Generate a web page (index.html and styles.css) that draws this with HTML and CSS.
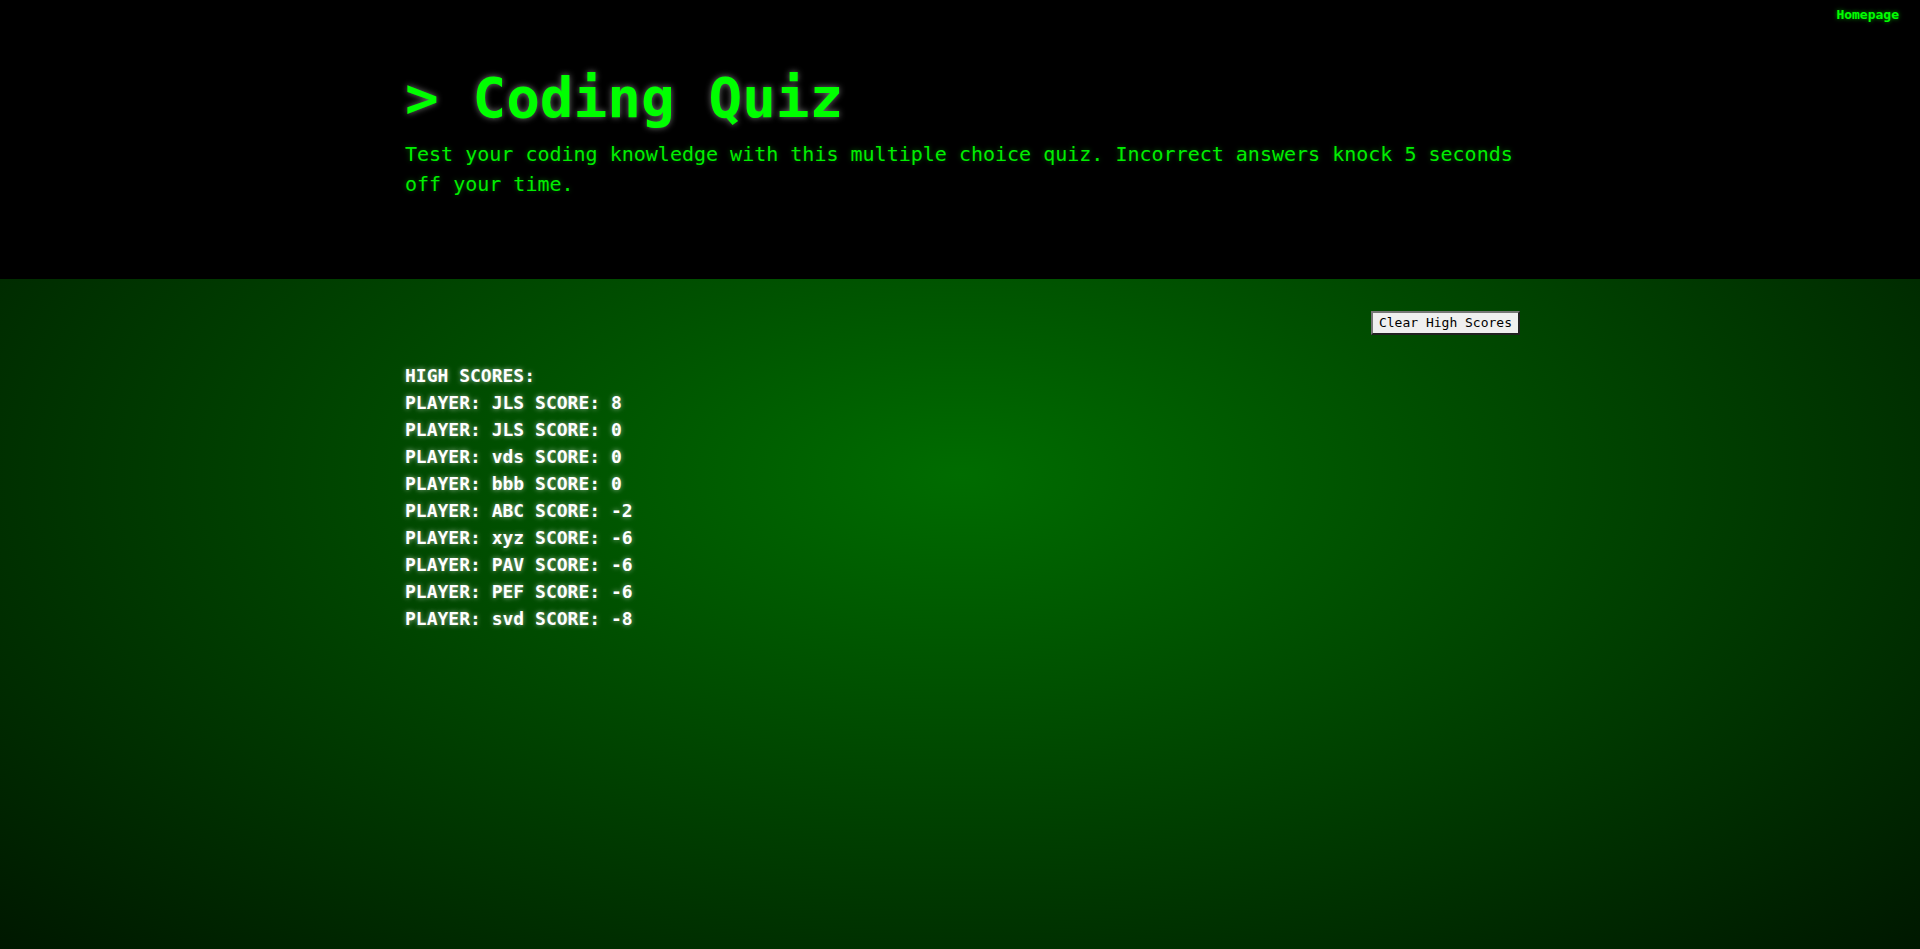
FILE: index.html
```html
<!DOCTYPE html>
<html lang="en">
<head>
<meta charset="utf-8">
<title>Coding Quiz - High Scores</title>
<link rel="stylesheet" href="styles.css">
</head>
<body>
<header class="site-header">
  <nav class="top-nav"><a class="home-link" href="#">Homepage</a></nav>
  <div class="container intro">
    <h1 class="title">&gt; Coding Quiz</h1>
    <p class="lead">Test your coding knowledge with this multiple choice quiz. Incorrect answers knock 5 seconds off your time.</p>
  </div>
</header>
<main class="container scores-area">
  <div class="actions"><button class="clear-btn" type="button">Clear High Scores</button></div>
  <ul class="scores">
    <li>HIGH SCORES:</li>
    <li>PLAYER: JLS SCORE: 8</li>
    <li>PLAYER: JLS SCORE: 0</li>
    <li>PLAYER: vds SCORE: 0</li>
    <li>PLAYER: bbb SCORE: 0</li>
    <li>PLAYER: ABC SCORE: -2</li>
    <li>PLAYER: xyz SCORE: -6</li>
    <li>PLAYER: PAV SCORE: -6</li>
    <li>PLAYER: PEF SCORE: -6</li>
    <li>PLAYER: svd SCORE: -8</li>
  </ul>
</main>
</body>
</html>
```

FILE: styles.css
```css
html, body {
  margin: 0;
  padding: 0;
}

body {
  min-height: 100vh;
  font-family: "DejaVu Sans Mono", "Liberation Mono", monospace;
  background: radial-gradient(ellipse at center, #006c00 0%, #001800 100%);
  background-attachment: fixed;
}

.site-header {
  background: #000;
  padding-bottom: 80px;
}

.top-nav {
  display: flex;
  justify-content: flex-end;
  padding: 7px 21px 0;
  height: 16px;
}

.home-link {
  font-size: 13px;
  font-weight: bold;
  line-height: 15px;
  color: #00ff00;
  text-decoration: none;
  text-shadow: 0 0 4px rgba(0, 255, 0, 0.6);
}

.container {
  width: 1115px;
  margin-left: calc(50% - 555px);
}

.title {
  margin: 42px 0 9px;
  font-size: 56px;
  font-weight: bold;
  line-height: normal;
  color: #00ff00;
  text-shadow: 0 0 6px rgba(255, 255, 255, 0.45);
}

.lead {
  margin: 0;
  font-size: 20px;
  line-height: 30px;
  color: #00ee00;
  text-shadow: 0 0 5px rgba(0, 255, 0, 0.35);
}

.scores-area {
  padding-top: 32px;
}

.actions {
  display: flex;
  justify-content: flex-end;
}

.clear-btn {
  font-family: "DejaVu Sans Mono", "Liberation Mono", monospace;
  font-size: 13px;
  line-height: 16px;
  padding: 2px 6px;
  color: #000;
  background: #efefef;
  border: 2px outset #767676;
  border-radius: 0;
  cursor: pointer;
}

.scores {
  list-style: none;
  margin: 27px 0 0;
  padding: 0;
  font-size: 18px;
  font-weight: bold;
  line-height: 27px;
  color: #ffffff;
  text-shadow: 0 0 5px rgba(255, 255, 255, 0.6);
}
```
